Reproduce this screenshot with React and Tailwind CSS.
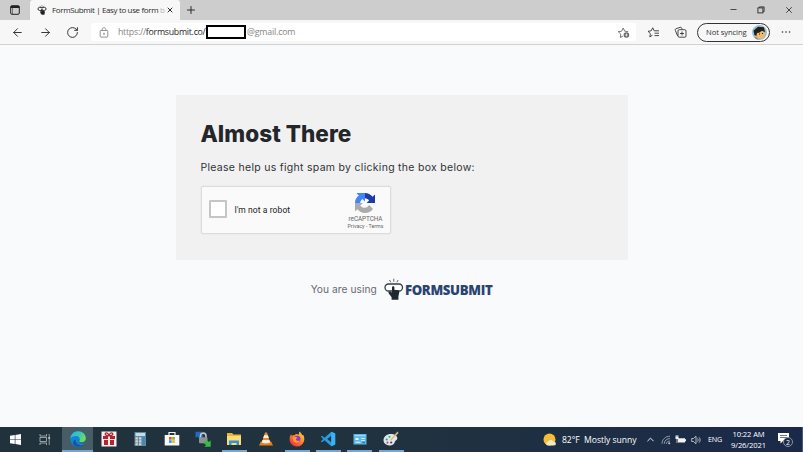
import React from 'react';
import { ArrowLeft, ArrowRight, RotateCw, Plus, X, Minus, ChevronUp } from 'lucide-react';

const EdgeIcon = () => (
  <svg viewBox="0 0 16 16" className="w-4 h-4">
    <defs>
      <linearGradient id="edgeTop" x1="0" y1="0" x2="1" y2="0.4">
        <stop offset="0" stopColor="#2fb4ec" />
        <stop offset="0.6" stopColor="#38c7b8" />
        <stop offset="1" stopColor="#6fdc54" />
      </linearGradient>
    </defs>
    <circle cx="8" cy="8" r="7.8" fill="#1784d2" />
    <path d="M0.3 7.2C1 3 4 .2 8 .2c4.600 0 7.800 3.200 7.800 6.900 0 2.500-1.800 4.100-4.200 4.100-1.900 0-3-.7-2.300-1.700C10.600 7.600 9 5 6.200 5 3.400 5 1.200 6.300.3 7.200z" fill="url(#edgeTop)" />
    <path d="M5.600 8.200C5 11.600 8 14.300 11.500 14.300c1.100 0 2-.3 2.700-.7-3 3-8.200 2.800-10.300.4C2 11.800 3 9.300 5.600 8.200z" fill="#0c59a4" />
    <path d="M8.600 8.300c1 .2 1 .9.600 1.500-.6 1 .5 1.800 2.300 1.700 1.600 0 3-.6 3.700-1.600-.2 1.100-.9 2.200-1.700 2.900-3.200.6-5.700-1.700-4.900-4.500z" fill="#465c66" />
  </svg>
);

const GiftIcon = () => (
  <svg viewBox="0 0 16 16" className="w-4 h-4">
    <rect x="0.500" y="0.500" width="15" height="15" fill="#f7eeee" />
    <path d="M2 5h5v3H2zM9 5h5v3H9zM3 9h4v5H3zM9 9h4v5H9z" fill="#b9212d" />
    <path d="M7.800 4.800C5 4.800 3.500 3.500 4.500 2.300 5.700 1.200 7.500 2.500 7.800 4.800zM8.200 4.800c2.800 0 4.300-1.300 3.300-2.500-1.200-1.100-3 .2-3.300 2.500z" fill="none" stroke="#b9212d" strokeWidth="1.300" />
  </svg>
);

const CalculatorIcon = () => (
  <svg viewBox="0 0 16 16" className="w-4 h-4">
    <rect x="2.500" y="1" width="11.500" height="14" fill="#6d8796" />
    <rect x="3.500" y="2" width="9.500" height="3" fill="#b9e1f2" />
    <path d="M3.500 6.200h2.400v2.200H3.500zM7 6.200h2.400v2.200H7zM3.500 9.200h2.400v2.200H3.500zM7 9.200h2.400v2.200H7zM3.500 12.200h2.400v2H3.500zM7 12.200h2.400v2H7z" fill="#c9d8df" />
    <path d="M10.500 6.200H13v2.200h-2.500zM10.500 9.200H13v5h-2.500z" fill="#2c8fc8" />
  </svg>
);

const StoreIcon = () => (
  <svg viewBox="0 0 16 16" className="w-4 h-4">
    <path d="M5 4V1.500h6V4" fill="none" stroke="#f5f5f5" strokeWidth="1.200" />
    <path d="M.7 4h14.600v10.500H.7z" fill="#f7f7f7" />
    <path d="M5 6h2.700v2.700H5z" fill="#e8502c" />
    <path d="M8.200 6h2.700v2.700H8.200z" fill="#7db52b" />
    <path d="M5 9.200h2.700v2.700H5z" fill="#2ba0dc" />
    <path d="M8.200 9.200h2.700v2.700H8.200z" fill="#f5b51c" />
  </svg>
);

const LockSyncIcon = () => (
  <svg viewBox="0 0 16 16" className="w-4 h-4">
    <path d="M.5 7V.7h6.800L5.500 2.500 8.500 5 5 8.500 2.300 5.400z" fill="#2368c9" />
    <path d="M5.500 7V5c0-3.800 5.500-3.800 5.500 0v2" fill="none" stroke="#c2c8ca" strokeWidth="1.600" />
    <rect x="4" y="6.300" width="8.500" height="6" rx="1" fill="#8b9394" />
    <path d="M15.700 9.200v6.500H9.300l1.800-1.800L8.700 12l3-3 2.200 2z" fill="#39ba43" />
  </svg>
);

const FolderIcon = () => (
  <svg viewBox="0 0 16 16" className="w-4 h-4">
    <path d="M1 2h5l1.500 1.500H15V14H1z" fill="#e8b43a" />
    <path d="M1 5h14v9H1z" fill="#fbdc79" />
    <path d="M3 14V9.500h10V14h-2.500v-2h-5v2z" fill="#3d90cf" />
  </svg>
);

const VlcIcon = () => (
  <svg viewBox="0 0 16 16" className="w-4 h-4">
    <path d="M2.800 10.500h10.400l1.800 4H1z" fill="#e87f16" />
    <path d="M7 1.500h2L12.300 12c-2 1.300-6.600 1.300-8.600 0z" fill="#f08a1d" />
    <path d="M6.100 4.200h3.800l.9 2.700H5.200zM4.500 9.100h7l.8 2.500c-2 1-6.600 1-8.600 0z" fill="#efefef" />
  </svg>
);

const FirefoxIcon = () => (
  <svg viewBox="0 0 16 16" className="w-4 h-4">
    <defs>
      <linearGradient id="fox" x1="1" y1="0" x2="0.200" y2="1">
        <stop offset="0" stopColor="#ffdf45" />
        <stop offset="0.500" stopColor="#ff8528" />
        <stop offset="1" stopColor="#ee2950" />
      </linearGradient>
    </defs>
    <path d="M2 3.500l1 1.300c.9-.7 1.700-.8 2.500-.6L7 3l3 .5L10.200.5c1.700 1 2.500 2.400 3 3.700l.9-.4c1.300 2 1.600 4.400.8 6.700C13.700 13.700 11 15.500 8 15.500c-4 0-7.300-3-7.400-7C.5 6.500 1 4.800 2 3.500z" fill="url(#fox)" />
    <circle cx="8.200" cy="8" r="3.200" fill="#8d36c8" />
    <path d="M4 6c2-.6 3 .1 4.500.5L7 8c-.3 1.700 2 2.500 4 1.200-1 3-5 3.300-6.500.8C3.800 8.800 3.600 7.400 4 6z" fill="#ff9b28" />
  </svg>
);

const VsCodeIcon = () => (
  <svg viewBox="0 0 16 16" className="w-4 h-4">
    <path d="M11.300.7l3.900 1.800v11l-3.900 1.800L4.500 9.200 2 11.200.8 10.500 3.200 8 .8 5.500 2 4.800l2.500 2zM11.300 4.800L7.200 8l4.100 3.200z" fill="#259de5" fillRule="evenodd" />
    <path d="M11.300.7l3.900 1.800v11l-3.900 1.800z" fill="#3cb1f4" />
  </svg>
);

const PanelIcon = () => (
  <svg viewBox="0 0 16 16" className="w-4 h-4">
    <rect x="1.500" y="3" width="13" height="10.500" fill="#5cb6e8" />
    <path d="M2.500 4.200h11v1H2.500z" fill="#a7e1fa" />
    <path d="M3.500 7h3v2h-3zM9 7h4v.8H9zM9 9h4v.8H9zM3.500 10.700h5v1h-5z" fill="#e6f6fd" />
    <path d="M10.500 10.800h2.500v1.500h-2.500z" fill="#2478b8" />
  </svg>
);

const PaintIcon = () => (
  <svg viewBox="0 0 16 16" className="w-4 h-4">
    <path d="M.5 9.500c0-4.500 4-7 8.500-6.500 3.300.3 5.500 2.200 5.300 4.500-.1 1.700-2 1.700-2.300 3-.6 2.700-3.200 4.500-6.200 4C2.700 14 .5 12 .5 9.500z" fill="#dfe7eb" />
    <circle cx="3.700" cy="8.500" r="1.100" fill="#3b92c8" />
    <circle cx="6.500" cy="5.800" r="1.100" fill="#5cae48" />
    <circle cx="4.500" cy="11.700" r="1.100" fill="#dc4d3f" />
    <circle cx="8.200" cy="11.500" r="1.100" fill="#324b58" />
    <path d="M14.500.5L7 9l1 .8L15.500 2z" fill="#e2b87b" />
  </svg>
);

const apps = [
  { id: 'edge', Icon: EdgeIcon, open: true, active: true },
  { id: 'gift', Icon: GiftIcon },
  { id: 'calculator', Icon: CalculatorIcon },
  { id: 'store', Icon: StoreIcon },
  { id: 'locksync', Icon: LockSyncIcon },
  { id: 'explorer', Icon: FolderIcon, open: true },
  { id: 'vlc', Icon: VlcIcon },
  { id: 'firefox', Icon: FirefoxIcon, open: true },
  { id: 'vscode', Icon: VsCodeIcon, open: true },
  { id: 'panel', Icon: PanelIcon, open: true },
  { id: 'paint', Icon: PaintIcon, open: true },
];

const TabBar = () => (
  <div className="flex h-5 shrink-0 bg-[#cdcdcd] text-[#2c2c2c]">
    <div className="w-[30px] flex items-center justify-center">
      <svg viewBox="0 0 10 10" className="w-[10px] h-[10px]" fill="none" stroke="#222">
        <rect x="0.700" y="0.700" width="8.600" height="8.600" rx="1.300" />
        <path d="M.7 2h8.600" strokeWidth="2" />
        <path d="M2.500 3v6" strokeWidth="0.500" />
      </svg>
    </div>
    <div className="w-[150px] flex items-center bg-[#f7f7f7] rounded-t-[3px] pl-[7px] pr-[6px]">
      <svg viewBox="0 0 10 10" className="w-[10px] h-[10px] shrink-0">
        <path d="M3 .8l.4 1M5 .2v1.200M7 .8l-.4 1" stroke="#444" strokeWidth="0.600" />
        <rect x="1" y="2.400" width="8" height="3" rx="1.500" fill="none" stroke="#333" />
        <path d="M4.300 3.500v3L2.800 6.200l.9 2.300 1.100 1.300h2.600L8 6.500 5.600 5.500v-2z" fill="#222" />
      </svg>
      <span className="ml-[5px] w-[108px] whitespace-nowrap text-[8px] tracking-[-0.360px] leading-3">
        FormSubmit | Easy to use form <span className="text-[#b5b5b5]">b</span>
      </span>
      <X className="ml-auto w-2 h-2 shrink-0" strokeWidth={3} />
    </div>
    <div className="w-[22px] flex items-center justify-center">
      <Plus className="w-3 h-3" strokeWidth={2} />
    </div>
    <div className="ml-auto flex items-center pr-[9px] gap-[19px] pb-px">
      <Minus className="w-[9px] h-[9px]" strokeWidth={2.200} />
      <svg viewBox="0 0 8 8" className="w-2 h-2" fill="none" stroke="#2c2c2c" strokeWidth="0.900">
        <rect x="0.900" y="1.900" width="5" height="5" />
        <path d="M2.400 1.900V.9h4.700v4.700H5.900" />
      </svg>
      <X className="w-[10px] h-[10px]" strokeWidth={2} />
    </div>
  </div>
);

const Toolbar = () => (
  <div className="flex h-[25px] shrink-0 items-center border-b border-[#d2d2d2] bg-[#f7f7f7] pl-[11px] pr-[12px] text-[#333]">
    <ArrowLeft className="w-[13px] h-[13px]" strokeWidth={1.800} />
    <ArrowRight className="ml-[15px] w-[13px] h-[13px]" strokeWidth={1.800} />
    <RotateCw className="ml-[14px] w-[13px] h-[13px]" strokeWidth={1.800} />
    <div className="ml-[12px] flex h-[18px] w-[545px] items-center rounded-[2px] bg-white pl-[8px] pr-[6px] text-[8.800px] text-[#858585]">
      <svg viewBox="0 0 10 11" className="w-[10px] h-[11px]" fill="none" stroke="#777" strokeWidth="0.800">
        <rect x="1.200" y="3.500" width="7.600" height="6.600" rx="0.800" />
        <path d="M3.200 3.500V2.300c0-2 3.600-2 3.600 0v1.200" />
        <circle cx="5" cy="6.800" r="0.500" fill="#777" />
      </svg>
      <span className="ml-[9px] w-[88px] pt-px whitespace-nowrap tracking-[-0.270px]">
        https://<span className="text-[#262626]">formsubmit.co/</span>
      </span>
      <span className="h-[14px] w-10 shrink-0 border-2 border-black bg-white" />
      <span className="ml-px pt-px whitespace-nowrap tracking-[-0.180px]">@gmail.com</span>
      <svg viewBox="0 0 13 13" className="ml-auto w-[13px] h-[13px]" fill="none" stroke="#555" strokeWidth="0.800" strokeLinejoin="round">
        <path d="M6 10L3.200 11.500l.6-3.400L1.200 5.700l3.400-.5L6.200 2l1.500 3.200 3.500.5" />
        <circle cx="9.400" cy="9" r="2.800" fill="#666" stroke="none" />
        <path d="M9.400 7.500v3M7.900 9h3" stroke="white" strokeWidth="0.700" />
      </svg>
    </div>
    <svg viewBox="0 0 13 13" className="ml-[11px] w-[13px] h-[13px]" fill="none" stroke="#333" strokeWidth="0.900" strokeLinejoin="round">
      <path d="M5.500 9.200l-2.700 1.700.6-3.300L1 5.300l3.200-.5L5.700 1.800l1.500 3H12M7.500 7.200H12M7.500 9.600H12" />
    </svg>
    <svg viewBox="0 0 13 13" className="ml-[14px] w-[13px] h-[13px]" fill="none" stroke="#333" strokeWidth="0.900">
      <path d="M3.500 9.800L1.300 4.300c-.3-.7 0-1.200.6-1.500l4.300-1.500c.6-.2 1.100 0 1.400.6l.5 1.200" />
      <rect x="4" y="3.700" width="8" height="7.500" rx="1.200" />
      <path d="M8 5.500v4M6 7.500h4" />
    </svg>
    <div className="ml-[10px] flex h-[19px] w-[73px] items-center justify-between rounded-full border border-[#333] pl-[8px] pr-[2px]">
      <span className="pt-px whitespace-nowrap text-[7.600px] tracking-[-0.080px]">Not syncing</span>
      <svg viewBox="0 0 15 15" className="w-[15px] h-[15px] shrink-0">
        <circle cx="7.500" cy="7.500" r="7.500" fill="#9bc0ce" />
        <path d="M4 7l7.500-1.500 1.500 4-2.500 4L5 13z" fill="#f3b968" />
        <path d="M1.500 5.500L6 1.700l6 .6 1 5-3-1.500-3 2-2 .3-.6 3-2-1z" fill="#202020" />
        <path d="M2.500 12.700c2-1 3 0 4 2a7 7 0 0 1-4-2z" fill="#c57933" />
        <path d="M7 9h1M10 8.500h1" stroke="#222" />
      </svg>
    </div>
    <svg viewBox="0 0 10 4" className="ml-auto w-[10px] h-1" fill="#333">
      <circle cx="1.500" cy="2" r="0.800" />
      <circle cx="5" cy="2" r="0.800" />
      <circle cx="8.500" cy="2" r="0.800" />
    </svg>
  </div>
);

const Recaptcha = () => (
  <div className="mt-[10px] flex h-12 w-[190px] items-center rounded-[2px] border border-[#dcdcdc] bg-[#fafafa] pl-[7px] pr-[6px] shadow-[0_0_2px_rgba(0,0,0,0.08)] font-[Roboto,sans-serif]">
    <span className="mb-[2px] h-[18px] w-[18px] rounded-[1px] border-2 border-[#c6c6c6] bg-white" />
    <span className="ml-[8px] text-[8.500px] text-[#222] tracking-[0.080px]">I'm not a robot</span>
    <div className="ml-auto flex flex-col items-center text-[#666]">
      <svg viewBox="0 0 64 64" className="mt-[3px] -ml-px w-5 h-5">
        <path d="M64 32V4.600l-7.600 7.600C50.200 4.600 41 0 32 0v17c5.500.2 10.200 2.800 13 7.100L37 32z" fill="#1c3aa9" />
        <path d="M32 0H4.500l7.600 7.600C4.600 13.500 0 22 0 32h16.600c.4-5.200 3.300-9.800 7.500-12.500L32 27z" fill="#4285f4" />
        <path d="M0 32v27.400l7.600-7.600C13.700 59.400 22.500 64 32 64c10.400 0 19.700-5 25.600-12.800L45.200 38.700c-3 5-7.500 8.700-13.500 8.700-6.500 0-11.500-3.500-14.700-7.700L25 32z" fill="#ababab" />
      </svg>
      <span className="mt-[2px] text-[6.400px] leading-[8px] tracking-[-0.080px]">reCAPTCHA</span>
      <span className="whitespace-nowrap text-[5.300px] leading-[7px]">Privacy - Terms</span>
    </div>
  </div>
);

const FormSubmitLogo = () => (
  <div className="flex items-center">
    <svg viewBox="0 0 20 23" className="w-5 h-[23px]">
      <path d="M5.500 2l1.300 2.300M9.800.7v3M14.100 2l-1.300 2.300" stroke="#555" strokeWidth="0.900" fill="none" />
      <rect x="1" y="6" width="17.500" height="7" rx="3.500" fill="#fff" stroke="#333e48" strokeWidth="1.300" />
      <path d="M8 9.500c0-1.600 2.400-1.600 2.400 0v2.300l3.400.5c1.100.2 1.600.9 1.500 2l-.9 4.200v3.300H7.600v-2.500L4.800 15.500c-.8-1.300 0-2.300 1.300-1.900l1.900.8z" fill="#20282f" />
    </svg>
    <span className="ml-px text-[13.200px] font-extrabold leading-5 tracking-[-0.350px] text-[#2c4372] font-['Open_Sans',sans-serif]">FORMSUBMIT</span>
  </div>
);

const Taskbar = () => (
  <div className="flex h-[25px] shrink-0 bg-gradient-to-r from-[#20333c] via-[#20323f] to-[#1a2949] text-white">
    <div className="w-[30px] flex items-center justify-center">
      <svg viewBox="0 0 12 12" className="w-[11px] h-[11px]" fill="#fff">
        <path d="M0 1.800l5.200-.7v4.600H0zM5.900 1L12 .1v5.600H5.900zM0 6.300h5.200v4.600L0 10.200zM5.900 6.300H12v5.600L5.900 11z" />
      </svg>
    </div>
    <div className="w-[32px] flex items-center justify-center">
      <svg viewBox="0 0 12 11" className="-ml-[3px] w-3 h-[11px]" fill="none" stroke="#b3bbbf" strokeWidth="0.800">
        <path d="M1 0v2h6.500V0M1 11V9h6.500v2M10.200 0v11" />
        <rect x="1" y="3.500" width="6.500" height="4" />
        <path d="M9.300 4h1.800" strokeWidth="2" />
      </svg>
    </div>
    {apps.map(({ id, Icon, open, active }) => (
      <div
        key={id}
        className={`flex w-[31.350px] flex-col items-center justify-between pt-[4px] ${active ? 'bg-[#465c66]' : ''}`}
      >
        <Icon />
        {open && <span className={`h-[2px] bg-[#70a9d8] ${active ? 'w-full' : 'w-[25px]'}`} />}
      </div>
    ))}
    <div className="ml-auto flex items-center border-r border-[#4d5970] pr-[10px]">
      <svg viewBox="0 0 14 14" className="w-[14px] h-[14px]">
        <circle cx="6.500" cy="6.500" r="6" fill="#f9bd35" />
        <path d="M5 12.500c-2.500 0-2.500-3.500 0-3.500.5-2.700 4.500-2.700 5.200-.2 3.500-.3 3.600 3.700.7 3.700z" fill="#f1e7cd" />
      </svg>
      <span className="ml-[5px] w-[75px] pt-px whitespace-nowrap text-[8.600px] tracking-[-0.050px]">82°F&nbsp; Mostly sunny</span>
      <ChevronUp className="ml-[8px] w-[11px] h-[11px]" strokeWidth={2} />
      <svg viewBox="0 0 10 10" className="ml-[5px] w-[10px] h-[10px]" fill="none" stroke="#aeb8c4" strokeWidth="0.800">
        <path d="M1 8.800C1 4.500 4.500 1.200 9 1.200M3.200 8.800c0-3 2.500-5.200 5.800-5.200M5.400 8.800C5.400 7.200 7 6 9 6" />
        <circle cx="8.200" cy="8.300" r="0.700" fill="#fff" />
      </svg>
      <svg viewBox="0 0 11 10" className="ml-[4px] w-[11px] h-[10px]" fill="#f2f2f2">
        <path d="M3 3.200h7v4.300H3zM10 4.300h1v2h-1zM.5 1.500h3V4h-3z" />
        <path d="M1.200 0v2M2.800 0v2M2 4v4" stroke="#fff" strokeWidth="0.700" />
      </svg>
      <svg viewBox="0 0 11 10" className="ml-[5px] w-[11px] h-[10px]" fill="none" stroke="#d6dbe2" strokeWidth="0.800">
        <path d="M.7 3.500h1.800L5 1.200v7.600L2.500 6.500H.7zM6.500 3.500c.8.900.8 2.100 0 3M8 2.300c1.500 1.600 1.500 3.800 0 5.400" />
      </svg>
      <span className="ml-[6px] w-[15px] text-[7.200px] tracking-[-0.150px]">ENG</span>
      <div className="ml-[7px] w-[37px] pt-px whitespace-nowrap text-center text-[7.600px] leading-[11.500px] tracking-[-0.100px]">
        <div>10:22 AM</div>
        <div>9/26/2021</div>
      </div>
      <div className="relative ml-[11px] h-[13px] w-[14px]">
        <svg viewBox="0 0 14 13" className="-mt-px w-[14px] h-[13px]">
          <path d="M0 1h11v8H5l-2.500 2.500V9H0z" fill="#fff" />
          <path d="M2 3.500h7M2 5.500h7" stroke="#344156" strokeWidth="0.700" />
        </svg>
        <span className="absolute left-[5px] top-[4px] flex h-[10px] w-[10px] items-center justify-center rounded-full border border-[#8995a3] bg-[#1b2945] text-[7px] leading-none">2</span>
      </div>
    </div>
  </div>
);

const App = () => {
  return (
    <div className="flex h-screen w-screen flex-col overflow-hidden bg-[#f9fafc] font-['Open_Sans','Noto_Sans',sans-serif]">
      <TabBar />
      <Toolbar />
      <main className="flex flex-1 flex-col items-center pt-[50px] font-[Inter,sans-serif]">
        <section className="h-[165px] w-[452px] bg-[#f1f1f1] px-[25px] pt-[25px]">
          <h1 className="text-[22.500px] font-extrabold leading-[28px] tracking-[0.050px] text-[#24262a]">Almost There</h1>
          <p className="mt-[12px] whitespace-nowrap text-[10.500px] leading-4 tracking-[0.290px] text-[#303236]">
            Please help us fight spam by clicking the box below:
          </p>
          <Recaptcha />
        </section>
        <div className="mt-[18px] flex items-center">
          <span className="mr-[7px] text-[10.200px] tracking-[0.060px] text-[#686b70]">You are using</span>
          <FormSubmitLogo />
        </div>
      </main>
      <Taskbar />
    </div>
  );
};

export default App;
